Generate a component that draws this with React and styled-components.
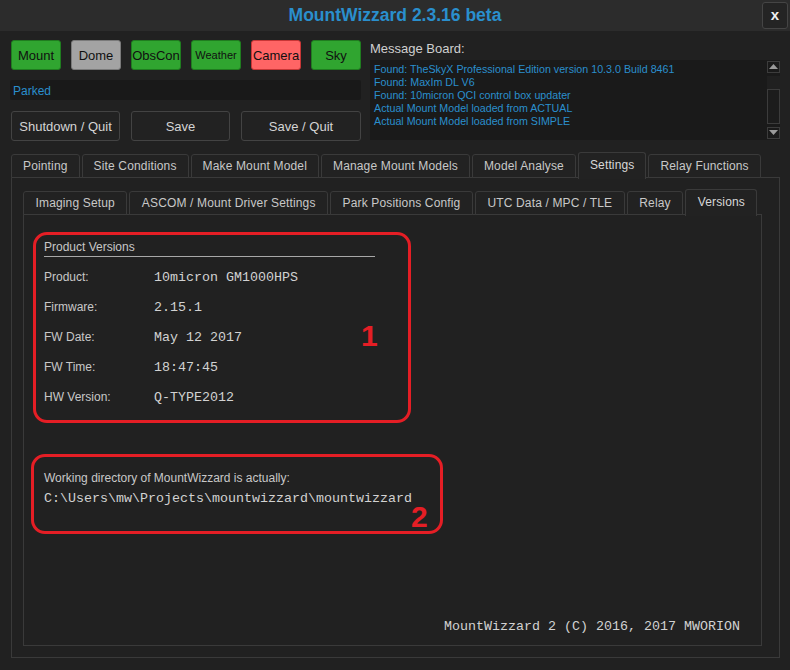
import React from "react";
import styled, { createGlobalStyle } from "styled-components";

const GlobalStyle = createGlobalStyle`
  html, body {
    margin: 0;
    padding: 0;
    background: #212121;
    font-family: "Liberation Sans", Arial, sans-serif;
  }
`;

const Window = styled.div`
  width: 790px;
  height: 670px;
  display: flex;
  flex-direction: column;
  background: #212121;
  color: #cccccc;
  overflow: hidden;
`;

const TitleBar = styled.div`
  height: 31px;
  flex: none;
  display: grid;
  grid-template-columns: 1fr auto 1fr;
  align-items: center;
  background: #2c2c2c;
`;

const Title = styled.div`
  grid-column: 2;
  color: #2a8fcd;
  font-weight: bold;
  font-size: 17.5px;
`;

const CloseButton = styled.div`
  grid-column: 3;
  justify-self: end;
  margin-right: 2px;
  width: 26px;
  height: 27px;
  box-sizing: border-box;
  border: 1px solid #454545;
  border-radius: 3px;
  background: #242424;
  color: #f0f0f0;
  font-weight: bold;
  font-size: 15px;
  display: flex;
  align-items: center;
  justify-content: center;
  padding-bottom: 3px;
`;

const Main = styled.div`
  flex: 1;
  display: flex;
  flex-direction: column;
  padding: 9px 10px 12px 11px;
  min-height: 0;
`;

const TopSection = styled.div`
  display: grid;
  grid-template-columns: 350px 1fr;
  column-gap: 9px;
`;

const LeftColumn = styled.div`
  display: flex;
  flex-direction: column;
`;

const ButtonRow = styled.div`
  display: flex;
  gap: 10px;
`;

const palette = {
  green: { bg: "#30a530", border: "#1f7d1f" },
  gray: { bg: "#a3a3a3", border: "#7a7a7a" },
  red: { bg: "#ff6565", border: "#c83636" },
};

const StatusButton = styled.div`
  width: 50px;
  height: 30px;
  box-sizing: border-box;
  border: 1px solid ${(p) => palette[p.$tone].border};
  border-radius: 3px;
  background: ${(p) => palette[p.$tone].bg};
  color: #101010;
  font-size: ${(p) => (p.$small ? "11px" : "13px")};
  display: flex;
  align-items: center;
  justify-content: center;
`;

const StatusBar = styled.div`
  margin: 10px 0 0 -1px;
  height: 20px;
  box-sizing: border-box;
  padding: 2px 0 0 3px;
  background: #191919;
  border-radius: 2px;
  color: #2a8fcd;
  font-size: 12px;
  line-height: 18px;
`;

const ActionRow = styled.div`
  display: flex;
  gap: 11px;
  margin-top: 11px;
`;

const ActionButton = styled.div`
  width: ${(p) => p.$w}px;
  height: 30px;
  box-sizing: border-box;
  border: 1px solid #434343;
  border-radius: 3px;
  background: #222222;
  color: #d4d4d4;
  font-size: 13px;
  display: flex;
  align-items: center;
  justify-content: center;
`;

const RightColumn = styled.div`
  display: flex;
  flex-direction: column;
`;

const BoardLabel = styled.div`
  height: 20px;
  font-size: 13px;
  color: #d0d0d0;
  line-height: 17px;
`;

const Board = styled.div`
  height: 80px;
  display: flex;
  background: #1a1a1a;
`;

const BoardText = styled.div`
  flex: 1;
  padding: 3px 0 0 4px;
  font-size: 10.7px;
  line-height: 13px;
  color: #2a8fcd;
`;

const ScrollBar = styled.div`
  width: 14px;
  display: flex;
  flex-direction: column;
  align-items: center;
  padding: 1px 0;
  gap: 3px;
`;

const ScrollArrow = styled.div`
  width: 13px;
  height: 12px;
  box-sizing: border-box;
  border: 1px solid #3c3c3c;
  display: flex;
  align-items: center;
  justify-content: center;
`;

const ScrollTrack = styled.div`
  flex: 1;
  width: 13px;
  display: flex;
  flex-direction: column;
  justify-content: flex-end;
  background: #202020;
`;

const ScrollThumb = styled.div`
  height: 35px;
  box-sizing: border-box;
  border: 1px solid #3c3c3c;
  background: #1c1c1c;
`;

const TabBar = styled.div`
  display: flex;
  align-items: flex-end;
  gap: 2px;
  margin-top: ${(p) => p.$top}px;
  position: relative;
  z-index: 1;
`;

const Tab = styled.div`
  height: ${(p) => (p.$active ? 27 : 24)}px;
  margin-bottom: ${(p) => (p.$active ? -1 : 0)}px;
  box-sizing: border-box;
  padding: 0 ${(p) => p.$pad}px;
  border: 1px solid #3a3a3a;
  border-bottom: ${(p) => (p.$active ? "none" : "1px solid #3a3a3a")};
  border-radius: 3px 3px 0 0;
  background: #222222;
  color: ${(p) => (p.$active ? "#d8d8d8" : "#c8c8c8")};
  font-size: 12px;
  letter-spacing: 0.15px;
  display: flex;
  align-items: center;
  padding-bottom: ${(p) => (p.$active ? 3 : 0)}px;
  white-space: nowrap;
`;

const Pane = styled.div`
  flex: 1;
  display: flex;
  flex-direction: column;
  border: 1px solid #3a3a3a;
  margin-top: -1px;
  padding: ${(p) => p.$pad};
  min-height: 0;
`;

const Content = styled.div`
  flex: 1;
  display: flex;
  flex-direction: column;
  padding: 17px 0 0 9px;
`;

const Annotated = styled.div`
  position: relative;
  width: ${(p) => p.$w}px;
  height: ${(p) => p.$h}px;
  box-sizing: border-box;
  margin: ${(p) => p.$margin};
  border: 3px solid #e51e25;
  border-radius: 14px;
  padding: ${(p) => p.$pad};
`;

const Marker = styled.div`
  position: absolute;
  left: ${(p) => p.$x}px;
  top: ${(p) => p.$y}px;
  color: #e51e25;
  font-weight: bold;
  font-size: 30px;
  line-height: 30px;
`;

const GroupTitle = styled.div`
  width: 331px;
  font-size: 12px;
  line-height: 14px;
  padding-bottom: 2px;
  border-bottom: 1px solid #a8a8a8;
  color: #c8c8c8;
`;

const InfoRow = styled.div`
  display: grid;
  grid-template-columns: 110px 1fr;
  height: 30px;
  align-items: center;
`;

const InfoLabel = styled.div`
  font-size: 12px;
  color: #c8c8c8;
`;

const MonoText = styled.div`
  font-family: "Liberation Mono", "Courier New", monospace;
  font-size: 13.33px;
  color: #d2d2d2;
`;

const Rows = styled.div`
  margin-top: 5px;
`;

const PathLine = styled(MonoText)`
  line-height: 20px;
  margin-top: 1px;
`;

const PlainLine = styled.div`
  font-size: 12px;
  line-height: 20px;
  padding-top: 1px;
  color: #c8c8c8;
`;

const Footer = styled(MonoText)`
  margin-top: auto;
  text-align: right;
  padding: 0 21px 11px 0;
  line-height: 15px;
`;

const Triangle = ({ down }) => (
  <svg width="9" height="6" viewBox="0 0 9 6">
    <polygon points={down ? "0,0 9,0 4.5,5" : "0,5 9,5 4.5,0"} fill="#9a9a9a" />
  </svg>
);

const statusButtons = [
  { label: "Mount", tone: "green" },
  { label: "Dome", tone: "gray" },
  { label: "ObsCon", tone: "green" },
  { label: "Weather", tone: "green", small: true },
  { label: "Camera", tone: "red" },
  { label: "Sky", tone: "green" },
];

const messages = [
  "Found: TheSkyX Professional Edition version 10.3.0 Build 8461",
  "Found: MaxIm DL V6",
  "Found: 10micron QCI control box updater",
  "Actual Mount Model loaded from ACTUAL",
  "Actual Mount Model loaded from SIMPLE",
];

const mainTabs = [
  "Pointing",
  "Site Conditions",
  "Make Mount Model",
  "Manage Mount Models",
  "Model Analyse",
  "Settings",
  "Relay Functions",
];

const settingsTabs = [
  "Imaging Setup",
  "ASCOM / Mount Driver Settings",
  "Park Positions Config",
  "UTC Data / MPC / TLE",
  "Relay",
  "Versions",
];

const versions = [
  ["Product:", "10micron GM1000HPS"],
  ["Firmware:", "2.15.1"],
  ["FW Date:", "May 12 2017"],
  ["FW Time:", "18:47:45"],
  ["HW Version:", "Q-TYPE2012"],
];

export default function App() {
  return (
    <>
      <GlobalStyle />
      <Window>
        <TitleBar>
          <Title>MountWizzard 2.3.16 beta</Title>
          <CloseButton>x</CloseButton>
        </TitleBar>
        <Main>
          <TopSection>
            <LeftColumn>
              <ButtonRow>
                {statusButtons.map((b) => (
                  <StatusButton key={b.label} $tone={b.tone} $small={b.small}>
                    {b.label}
                  </StatusButton>
                ))}
              </ButtonRow>
              <StatusBar>Parked</StatusBar>
              <ActionRow>
                <ActionButton $w={109}>Shutdown / Quit</ActionButton>
                <ActionButton $w={99}>Save</ActionButton>
                <ActionButton $w={120}>Save / Quit</ActionButton>
              </ActionRow>
            </LeftColumn>
            <RightColumn>
              <BoardLabel>Message Board:</BoardLabel>
              <Board>
                <BoardText>
                  {messages.map((m) => (
                    <div key={m}>{m}</div>
                  ))}
                </BoardText>
                <ScrollBar>
                  <ScrollArrow>
                    <Triangle />
                  </ScrollArrow>
                  <ScrollTrack>
                    <ScrollThumb />
                  </ScrollTrack>
                  <ScrollArrow>
                    <Triangle down />
                  </ScrollArrow>
                </ScrollBar>
              </Board>
            </RightColumn>
          </TopSection>

          <TabBar $top={11}>
            {mainTabs.map((t) => (
              <Tab key={t} $pad={11} $active={t === "Settings"}>
                {t}
              </Tab>
            ))}
          </TabBar>
          <Pane $pad="11px 17px 11px 11px">
            <TabBar $top={0}>
              {settingsTabs.map((t) => (
                <Tab key={t} $pad={11.5} $active={t === "Versions"}>
                  {t}
                </Tab>
              ))}
            </TabBar>
            <Pane $pad="0">
              <Content>
                <Annotated $w={378} $h={191} $margin="0" $pad="5px 0 0 8px">
                  <GroupTitle>Product Versions</GroupTitle>
                  <Rows>
                    {versions.map(([k, v]) => (
                      <InfoRow key={k}>
                        <InfoLabel>{k}</InfoLabel>
                        <MonoText>{v}</MonoText>
                      </InfoRow>
                    ))}
                  </Rows>
                  <Marker $x={325} $y={86}>1</Marker>
                </Annotated>
                <Annotated $w={412} $h={80} $margin="31px 0 0 -2px" $pad="10px 0 0 10px">
                  <PlainLine>Working directory of MountWizzard is actually:</PlainLine>
                  <PathLine>C:\Users\mw\Projects\mountwizzard\mountwizzard</PathLine>
                  <Marker $x={377} $y={45}>2</Marker>
                </Annotated>
                <Footer>MountWizzard 2 (C) 2016, 2017 MWORION</Footer>
              </Content>
            </Pane>
          </Pane>
        </Main>
      </Window>
    </>
  );
}
